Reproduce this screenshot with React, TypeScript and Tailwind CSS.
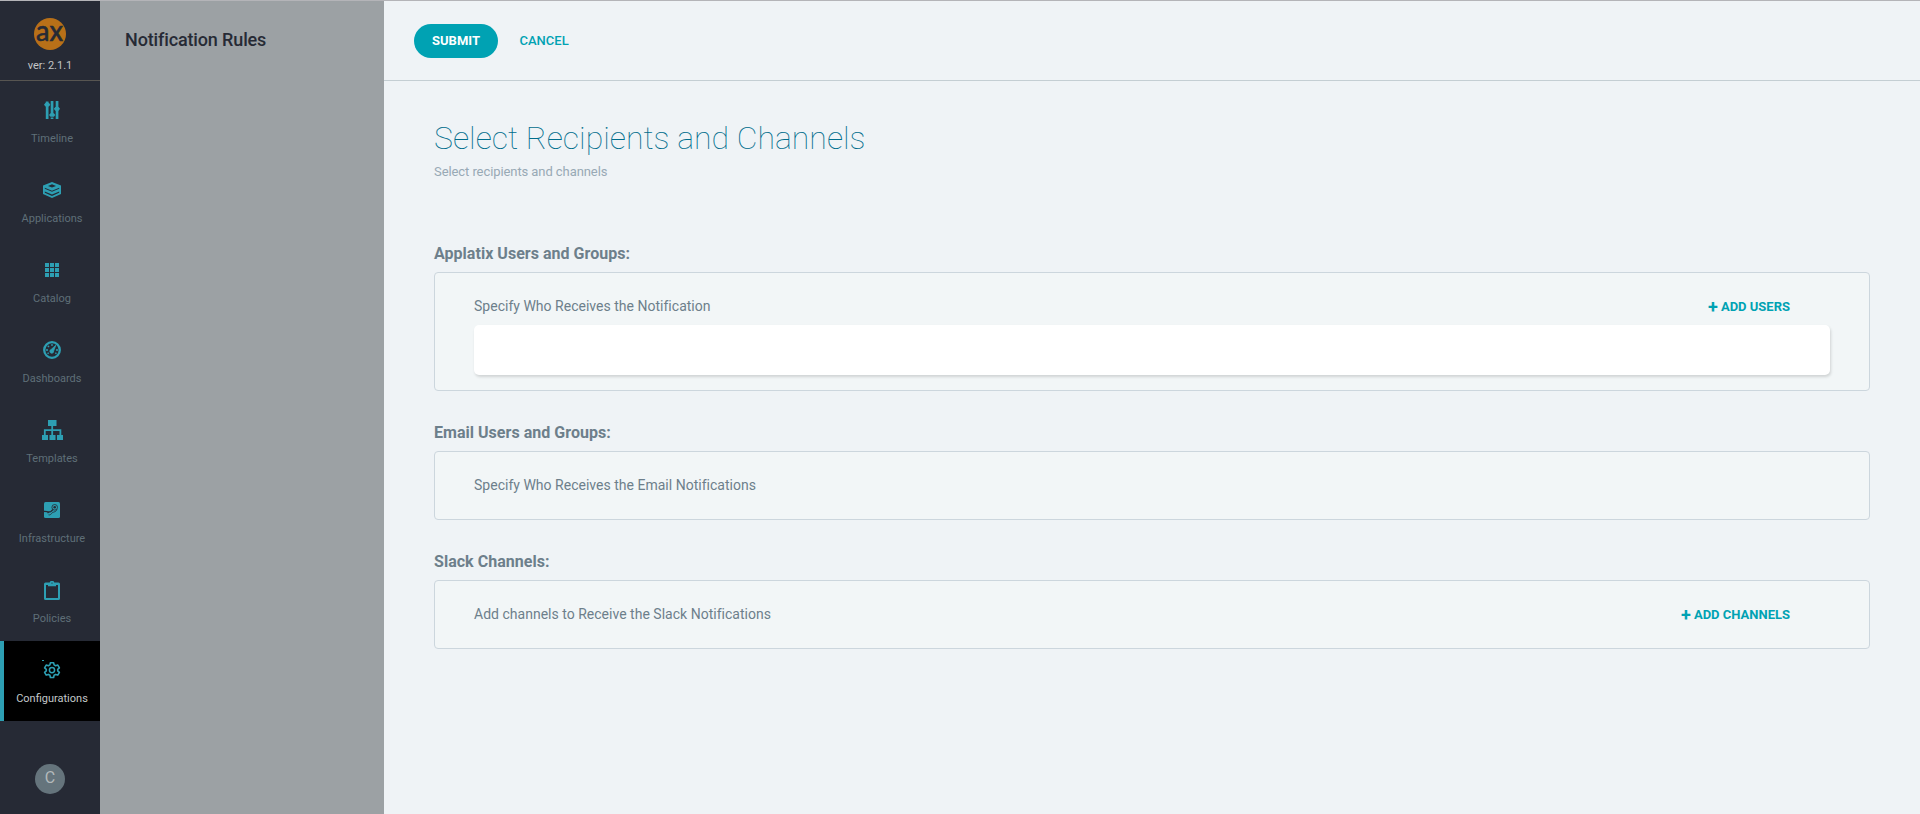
import React from "react";

const TimelineIcon = () => (
  <svg width="16" height="18" viewBox="0 0 16 18" fill="currentColor">
    <path d="M1.800 5h2.700v13H1.800zM6.700 0h2.700v13H6.700zM11.700 0h2.700v6h-2.700zM11.700 9h2.700v9h-2.700zM6.700 16.500h2.700V18H6.700zM1.800 .5h2.700V2H1.800z" />
    <path d="M0 3.700 1.500 1.800h3.400L6.300 3.700 4.900 5.400H1.500zM5 14l1.500-1.800h3.400l1.400 1.800-1.400 1.800H6.500zM9.800 7.800l1.500-1.700h3.300L16 7.800l-1.400 1.900h-3.300z" />
  </svg>
);

const ApplicationsIcon = () => (
  <svg width="18" height="16" viewBox="0 0 18 16" fill="currentColor">
    <path fillRule="evenodd" d="M9 0 18 3.500V12L9 16 0 12V3.500zM9 2.200 5 3.900 9 5.600l4-1.700zM1.800 5.700v1L9 9.800l7.200-3.100v-1L9 8.800zM1.800 9.400v1.300L9 13.900l7.200-3.200V9.400L9 12.500z" />
  </svg>
);

const CatalogIcon = () => (
  <svg width="14" height="14" viewBox="0 0 14 14" fill="currentColor" shapeRendering="crispEdges">
    <path d="M0 0h4v4H0zM5 0h4v4H5zM10 0h4v4h-4zM0 5h4v4H0zM5 5h4v4H5zM10 5h4v4h-4zM0 10h4v4H0zM5 10h4v4H5zM10 10h4v4h-4z" />
  </svg>
);

const DashboardsIcon = () => (
  <svg width="18" height="18" viewBox="0 0 18 18" fill="none" stroke="currentColor">
    <circle cx="9" cy="9" r="7.800" strokeWidth="2.300" />
    <path d="M3 9h2M4.700 4.700 6.100 6.100M9 3v2M13 9h2M4.500 12.600l1.200-.7M13.500 12.600l-1.200-.7" strokeWidth="1.300" />
    <path d="M12.800 4.300 10.600 10a1.900 1.900 0 1 1-2.500-1.500z" fill="currentColor" strokeWidth=".8" />
  </svg>
);

const TemplatesIcon = () => (
  <svg width="21" height="20" viewBox="0 0 21 20" fill="currentColor">
    <path d="M6 0h8.500v6h-3.400v3.200h8.200V15H21v5h-6v-5h2.500v-4h-6.400v4h2.400v5h-6v-5h1.800v-4H3.700v4H6v5H0v-5h1.900V9.200h7.400V6H6z" />
  </svg>
);

const InfrastructureIcon = () => (
  <svg width="16" height="16" viewBox="0 0 16 16">
    <rect width="16" height="16" rx="1.500" fill="currentColor" />
    <g fill="none" stroke="#262a35">
      <circle cx="10.700" cy="5.300" r="2.800" strokeWidth=".8" />
      <path d="M0 9.500c2.500-.3 4 1 6.700.2L9 7.500M3.500 11l2.300-1.500" strokeWidth="1.300" />
      <path d="M13 7.500c-.7 2-3 2.700-4.300 2.800-1.500 2-2.800 3-4.200 2.500" strokeWidth=".8" />
    </g>
    <circle cx="10.700" cy="5.300" r="1.300" fill="#262a35" />
  </svg>
);

const PoliciesIcon = () => (
  <svg width="16" height="19" viewBox="0 0 16 19" fill="currentColor">
    <path fillRule="evenodd" d="M1.500 1.500h4.200a2.400 2.400 0 0 1 4.600 0h4.200A1.500 1.500 0 0 1 16 3v14.500a1.500 1.500 0 0 1-1.500 1.500h-13A1.500 1.500 0 0 1 0 17.500V3a1.500 1.500 0 0 1 1.500-1.500zM2 4v13h12V4h-2v1.200H4V4zM8 1.500a.6.600 0 1 0 0 1.200.6.600 0 0 0 0-1.200z" />
  </svg>
);

const ConfigurationsIcon = () => (
  <svg width="20" height="20" viewBox="0 0 20 20" fill="none" stroke="currentColor">
    <path d="M8.400 2.700h3.200l.5 2.200 1.500.9 2.200-.7 1.600 2.700-1.700 1.500v1.600l1.700 1.500-1.600 2.700-2.200-.7-1.500.9-.5 2.200H8.400l-.5-2.200-1.500-.9-2.200.7-1.600-2.700 1.700-1.500V9.300L2.600 7.800l1.600-2.700 2.200.7 1.500-.9z" strokeWidth="1.600" strokeLinejoin="round" />
    <circle cx="10" cy="10.100" r="2.600" strokeWidth="1.500" />
    <path d="M0 .5h2" strokeWidth="1" />
  </svg>
);

const items = [
  { label: "Timeline", Icon: TimelineIcon },
  { label: "Applications", Icon: ApplicationsIcon },
  { label: "Catalog", Icon: CatalogIcon },
  { label: "Dashboards", Icon: DashboardsIcon },
  { label: "Templates", Icon: TemplatesIcon },
  { label: "Infrastructure", Icon: InfrastructureIcon },
  { label: "Policies", Icon: PoliciesIcon },
  { label: "Configurations", Icon: ConfigurationsIcon, active: true },
];

function Sidebar() {
  return (
    <aside className="flex w-[100px] shrink-0 flex-col bg-[#262a35]">
      <div className="flex h-20 flex-col items-center border-b border-[#575551] pt-[17px]">
        <svg width="32" height="32" viewBox="0 0 32 32" className="overflow-visible">
          <circle cx="16" cy="16" r="16" fill="#b87018" />
          <text x="15.500" y="23" textAnchor="middle" textLength="27" lengthAdjust="spacingAndGlyphs" className="font-[Lato,sans-serif] text-[28px] font-medium" fill="#262a35" stroke="#262a35" strokeWidth=".5">
            ax
          </text>
        </svg>
        <span className="mt-2 text-[11px] leading-4 text-[#c3c5c6]">ver: 2.1.1</span>
      </div>
      <nav className="flex flex-col">
        {items.map(({ label, Icon, active }) => (
          <a
            key={label}
            className={
              active
                ? "flex h-20 flex-col items-center border-l-4 border-[#2d9fb3] bg-black pt-[15px] text-[#c3c8ca]"
                : "flex h-20 flex-col items-center border-l-4 border-transparent pt-[15px] text-[#5f6f78]"
            }
          >
            <span className="flex h-7 items-center text-[#2d9fb3]">
              <Icon />
            </span>
            <span className="mt-[7px] text-[11px] leading-4">{label}</span>
          </a>
        ))}
      </nav>
      <div className="mx-auto mt-auto mb-5 flex size-[30px] items-center justify-center rounded-full bg-[#65747c] pb-[3px] text-base text-[#b3b9bb]">
        C
      </div>
    </aside>
  );
}

function Section({ title, text, action, field }: { title: string; text: string; action?: string; field?: boolean }) {
  return (
    <section>
      <h2 className="text-base leading-6 font-bold tracking-[0.03px] text-[#6d7f8b]">{title}</h2>
      <div className={field ? "mt-1.5 h-[119px] rounded border border-[#ccd6dd] bg-[#f2f6f7] px-[39px] pt-[23px]" : "mt-1.5 h-[69px] rounded border border-[#ccd6dd] bg-[#f2f6f7] px-[39px] pt-[23px]"}>
        <div className="flex h-5 items-center justify-between pr-10">
          <p className="text-sm leading-5 tracking-[0.015px] text-[#6d7f8b]">{text}</p>
          {action && (
            <button className="flex items-center gap-[3px] pt-px text-[13px] leading-5 font-bold text-[#00a2b3]">
              <span className="text-lg leading-5">+</span>
              <span>{action}</span>
            </button>
          )}
        </div>
        {field && <div className="mt-[9px] h-[50px] rounded-[5px] bg-white shadow-[1px_2px_3px_rgba(0,0,0,0.14)]" />}
      </div>
    </section>
  );
}

export default function App() {
  return (
    <div className="flex h-[814px] w-[1920px] overflow-hidden border-t border-[#b4b4b8] bg-[#eff3f6] font-[Roboto,sans-serif]">
      <Sidebar />
      <div className="w-[284px] shrink-0 bg-[#9ca1a4] pt-[27px] pl-[25px]">
        <h1 className="text-lg leading-6 font-medium tracking-[-0.14px] text-[#262a35]">Notification Rules</h1>
      </div>
      <main className="flex-1">
        <header className="flex h-20 items-start border-b border-[#c4ced3] pt-[23px] pl-[30px]">
          <button className="h-[34px] w-[84px] rounded-full bg-[#00a2b3] text-[13px] font-bold text-white">SUBMIT</button>
          <button className="ml-[21.500px] h-[34px] text-[13px] font-medium text-[#00a2b3]">CANCEL</button>
        </header>
        <div className="pt-[37px] pr-[50px] pl-[50px]">
          <h2 className="text-[32px] leading-10 font-thin text-[#006d8c]">Select Recipients and Channels</h2>
          <p className="mt-1 text-[13px] leading-5 tracking-[-0.08px] text-[#98a9b5]">Select recipients and channels</p>
          <div className="mt-[60px] flex flex-col gap-[30px]">
            <Section title="Applatix Users and Groups:" text="Specify Who Receives the Notification" action="ADD USERS" field />
            <Section title="Email Users and Groups:" text="Specify Who Receives the Email Notifications" />
            <Section title="Slack Channels:" text="Add channels to Receive the Slack Notifications" action="ADD CHANNELS" />
          </div>
        </div>
      </main>
    </div>
  );
}
